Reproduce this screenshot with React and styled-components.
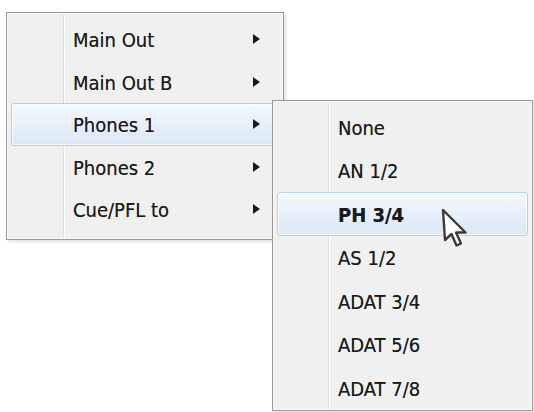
import React from 'react';
import styled, { createGlobalStyle } from 'styled-components';

const GlobalStyle = createGlobalStyle`
    html, body {
        margin: 0;
        padding: 0;
        background: #ffffff;
    }
    body {
        font-family: "DejaVu Sans Condensed", "DejaVu Sans", sans-serif;
        color: #1a1a1a;
    }
`;

const mainItems = ['Main Out', 'Main Out B', 'Phones 1', 'Phones 2', 'Cue/PFL to'];
const subItems = ['None', 'AN 1/2', 'PH 3/4', 'AS 1/2', 'ADAT 3/4', 'ADAT 5/6', 'ADAT 7/8'];

const App = () => {
    return (
        <Stage>
            <GlobalStyle />
            <Menu $width={278} $height={228} $gutter={56} $padTop={5}>
                {mainItems.map((label) => (
                    <Item key={label} $h={42.5} $pad={61} $active={label === 'Phones 1'}>
                        <Label>{label}</Label>
                        <Arrow />
                    </Item>
                ))}
            </Menu>
            <SubMenu $width={261} $height={311} $gutter={55} $padTop={4}>
                {subItems.map((label) => (
                    <Item key={label} $h={43.5} $pad={60} $active={label === 'PH 3/4'}>
                        <Label $bold={label === 'PH 3/4'}>{label}</Label>
                    </Item>
                ))}
            </SubMenu>
            <Cursor width="30" height="42" viewBox="0 0 30 42">
                <path
                    d="M2 2 L4 32 L10.5 26 L15.5 37.5 L20 35.5 L15 24.5 L24.5 24.5 Z"
                    fill="#ffffff"
                    stroke="#3a3a3a"
                    strokeWidth="2.4"
                    strokeLinejoin="round"
                />
            </Cursor>
        </Stage>
    );
}

const Stage = styled.div`
    position: relative;
    width: 534px;
    height: 412px;
    padding: 12px 0 0 6px;
    box-sizing: border-box;
    overflow: hidden;
`;

const Menu = styled.div`
    box-sizing: border-box;
    width: ${(p) => p.$width}px;
    height: ${(p) => p.$height}px;
    padding: ${(p) => p.$padTop}px 4px 0 4px;
    border: 1px solid #979797;
    background:
        linear-gradient(
            to right,
            transparent ${(p) => p.$gutter}px,
            #dedede ${(p) => p.$gutter}px,
            #dedede ${(p) => p.$gutter + 1}px,
            #ffffff ${(p) => p.$gutter + 1}px,
            #ffffff ${(p) => p.$gutter + 2}px,
            transparent ${(p) => p.$gutter + 2}px
        ),
        #f0f0f0;
    box-shadow: inset 0 0 0 1px #fbfbfb, 2px 2px 3px rgba(0, 0, 0, 0.12);
    display: flex;
    flex-direction: column;
`;

const SubMenu = styled(Menu)`
    position: absolute;
    left: 272px;
    top: 100px;
`;

const Item = styled.div`
    box-sizing: border-box;
    height: ${(p) => p.$h}px;
    flex: none;
    display: flex;
    align-items: center;
    padding: 2px 18px 0 ${(p) => p.$pad}px;
    border: 1px solid ${(p) => (p.$active ? '#b6d0ea' : 'transparent')};
    border-radius: 3px;
    background: ${(p) =>
        p.$active
            ? 'linear-gradient(to bottom, #f4f8fd 0%, #e8f0fa 45%, #dce8f6 100%)'
            : 'transparent'};
    box-shadow: ${(p) => (p.$active ? 'inset 0 0 0 1px rgba(255,255,255,0.7)' : 'none')};
`;

const Label = styled.span`
    font-size: 20px;
    font-weight: ${(p) => (p.$bold ? 700 : 400)};
    letter-spacing: 0;
    white-space: nowrap;
    text-shadow: 0 0 0.6px rgba(0, 0, 0, 0.55);
`;

const Arrow = styled.span`
    margin-left: auto;
    margin-top: -2px;
    width: 0;
    height: 0;
    border-top: 5.5px solid transparent;
    border-bottom: 5.5px solid transparent;
    border-left: 7px solid #1a1a1a;
`;

const Cursor = styled.svg`
    position: absolute;
    left: 441px;
    top: 208px;
`;

export default App;
